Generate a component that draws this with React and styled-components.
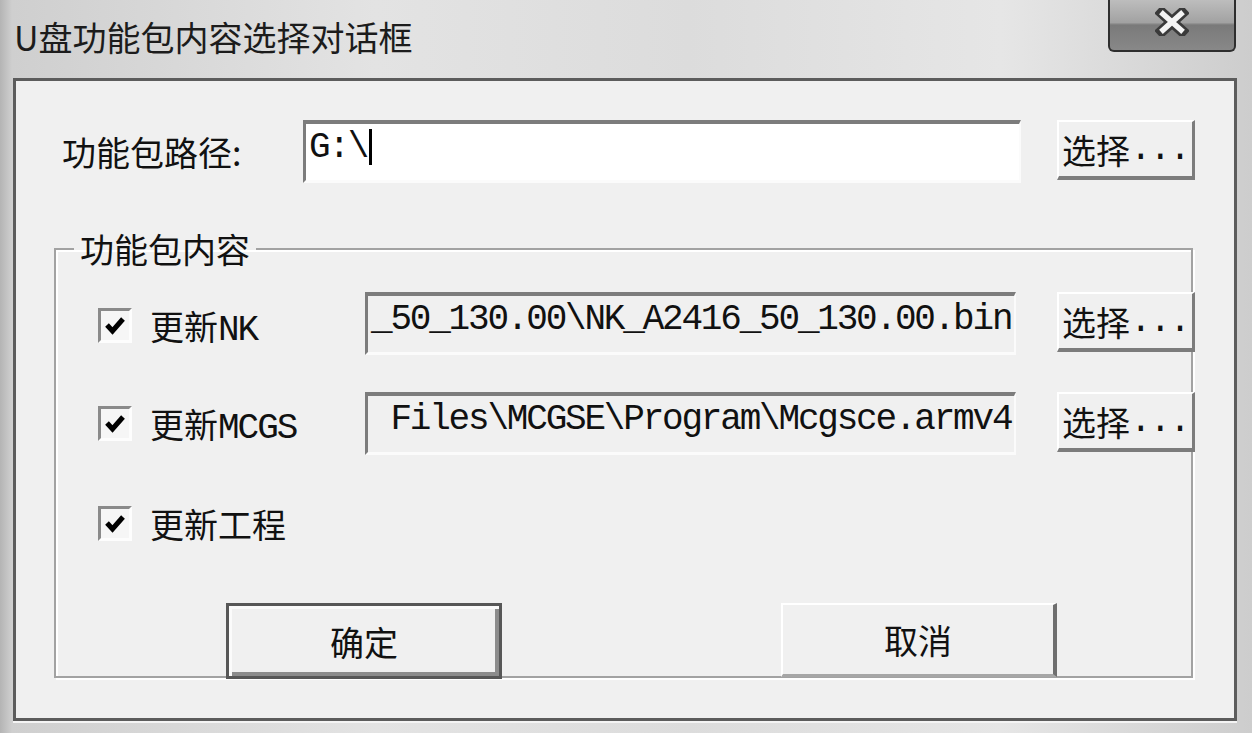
import React from 'react';
import styled, { createGlobalStyle } from 'styled-components';

const GlobalStyle = createGlobalStyle`
	html, body {
		margin: 0;
		padding: 0;
	}
	body {
		width: 1252px;
		height: 733px;
		overflow: hidden;
		font-family: "Liberation Mono", "Noto Sans CJK SC", monospace;
		color: #111;
	}
`;

const Window = styled.div`
	width: 1252px;
	height: 733px;
	box-sizing: border-box;
	display: flex;
	flex-direction: column;
	padding: 0 15px 12px 13px;
	background: linear-gradient(90deg, #b4b4b4 0px, #cfcfcf 12px, #e3e3e3 30%, #dcdcdc 55%, #e6e6e6 80%, #cdcdcd 100%);
`;

const TitleBar = styled.div`
	height: 78px;
	flex-shrink: 0;
	display: flex;
	align-items: flex-start;
`;

const Title = styled.div`
	margin: 18px 0 0 1px;
	font-family: "Noto Sans CJK SC", sans-serif;
	font-size: 34px;
	line-height: 38px;
	color: #1c1c1c;
`;

const CloseButton = styled.div`
	margin-left: auto;
	margin-right: 1px;
	width: 128px;
	height: 52px;
	box-sizing: border-box;
	border: 2px solid #2e2e2e;
	border-top: none;
	border-radius: 0 0 6px 6px;
	background: linear-gradient(180deg, #bdbdbd 0%, #a2a2a2 45%, #7a7a7a 50%, #888 100%);
	display: flex;
	align-items: center;
	justify-content: center;
	padding-bottom: 6px;
`;

const Client = styled.div`
	flex: 1;
	display: flex;
	flex-direction: column;
	background: #f0f0f0;
	border: 3px solid #5c5c5c;
	box-shadow: 0 2px 0 #f4f4f4;
	padding: 39px 39px 0 38px;
`;

const PathRow = styled.div`
	display: flex;
	align-items: flex-start;
	margin-left: 8px;
`;

const PathLabel = styled.div`
	width: 241px;
	height: 63px;
	flex-shrink: 0;
	display: flex;
	align-items: center;
`;

const Cjk = styled.span`
	font-family: "Noto Sans CJK SC", sans-serif;
	font-size: 34px;
	letter-spacing: 0;
`;

const Field = styled.div`
	width: ${p => p.$width}px;
	height: 63px;
	flex-shrink: 0;
	box-sizing: border-box;
	background: ${p => (p.$white ? '#fff' : '#f0f0f0')};
	border-top: 4px solid #7c7c7c;
	border-left: 3px solid #7c7c7c;
	border-right: 2px solid #fbfbfb;
	border-bottom: 3px solid #fbfbfb;
	padding: 2px 0 0 3px;
	font-size: 36px;
	letter-spacing: -2.2px;
	line-height: 44px;
	white-space: pre;
	overflow: hidden;
`;

const Caret = styled.span`
	display: inline-block;
	width: 3px;
	height: 36px;
	background: #000;
	vertical-align: -8px;
	margin-left: 2px;
`;

const SmallButton = styled.div`
	width: 138px;
	height: 60px;
	flex-shrink: 0;
	box-sizing: border-box;
	margin-left: ${p => p.$gap}px;
	background: #f0f0f0;
	border-top: 2px solid #fff;
	border-left: 2px solid #fff;
	border-right: 3px solid #7c7c7c;
	border-bottom: 4px solid #7c7c7c;
	display: flex;
	align-items: center;
	padding-left: 3px;
	font-size: 36px;
	letter-spacing: -2px;
	white-space: pre;
`;

const Group = styled.fieldset`
	margin: 49px 2px 0 0;
	padding: 26px 0 0 0;
	border: 2px solid #a2a2a2;
	box-shadow: inset 2px 2px 0 #fff, 2px 2px 0 #fff;
	min-width: 0;
`;

const Legend = styled.legend`
	margin-left: 18px;
	padding: 0 6px;
	font-family: "Noto Sans CJK SC", sans-serif;
	font-size: 34px;
	line-height: 34px;
`;

const GroupBody = styled.div`
	padding-left: 42px;
	display: flex;
	flex-direction: column;
	gap: 37px;
`;

const Row = styled.div`
	display: flex;
	align-items: flex-start;
`;

const CheckLabel = styled.div`
	width: 267px;
	height: 63px;
	flex-shrink: 0;
	display: flex;
	align-items: center;
	gap: 18px;
	font-size: 36px;
	letter-spacing: -2px;
	padding-top: ${p => p.$shift || 0}px;
	box-sizing: border-box;
`;

const CheckBox = styled.div`
	width: 34px;
	height: 35px;
	flex-shrink: 0;
	box-sizing: border-box;
	background: #f6f6f6;
	border-top: 3px solid #8a8a8a;
	border-left: 3px solid #8a8a8a;
	border-right: 3px solid #fdfdfd;
	border-bottom: 3px solid #fdfdfd;
	display: flex;
	align-items: center;
	justify-content: center;
`;

const ButtonRow = styled.div`
	display: flex;
	margin: 48px 0 -3px 170px;
	gap: 279px;
`;

const DialogButton = styled.div`
	width: 276px;
	height: ${p => (p.$default ? 76 : 74)}px;
	box-sizing: border-box;
	background: #f0f0f0;
	display: flex;
	align-items: center;
	justify-content: center;
	font-family: "Noto Sans CJK SC", sans-serif;
	font-size: 34px;
	${p =>
		p.$default
			? `border: 3px solid #575757;
		box-shadow: inset 3px 3px 0 #fbfbfb, inset -4px -4px 0 #8c8c8c;`
			: `border-top: 2px solid #fff;
		border-left: 2px solid #fff;
		border-right: 4px solid #6e6e6e;
		border-bottom: 3px solid #a6a6a6;`}
`;

function CloseGlyph() {
	return (
		<svg width="34" height="28" viewBox="0 0 34 28">
			<path d="M7 5 L27 23 M27 5 L7 23" stroke="#3a3a3a" strokeWidth="11" strokeLinecap="square" />
			<path d="M8 6 L26 22 M26 6 L8 22" stroke="#f4f4f4" strokeWidth="5.5" strokeLinecap="square" />
		</svg>
	);
}

function Tick() {
	return (
		<svg width="22" height="19" viewBox="0 0 22 19">
			<path d="M3 9 L8.5 15 L19 3" fill="none" stroke="#000" strokeWidth="5" />
		</svg>
	);
}

function Choose({ gap }) {
	return (
		<SmallButton $gap={gap}>
			<Cjk>选择</Cjk>...
		</SmallButton>
	);
}

function Option({ name, latin, path, shift }) {
	return (
		<Row>
			<CheckLabel $shift={shift}>
				<CheckBox>
					<Tick />
				</CheckBox>
				<span>
					<Cjk>{name}</Cjk>
					{latin}
				</span>
			</CheckLabel>
			{path !== undefined && (
				<>
					<Field $width={651}>{path}</Field>
					<Choose gap={41} />
				</>
			)}
		</Row>
	);
}

export default function App() {
	return (
		<Window>
			<GlobalStyle />
			<TitleBar>
				<Title>U盘功能包内容选择对话框</Title>
				<CloseButton>
					<CloseGlyph />
				</CloseButton>
			</TitleBar>
			<Client>
				<PathRow>
					<PathLabel>
						<Cjk>功能包路径:</Cjk>
					</PathLabel>
					<Field $width={718} $white>
						G:\<Caret />
					</Field>
					<Choose gap={36} />
				</PathRow>
				<Group>
					<Legend>功能包内容</Legend>
					<GroupBody>
						<Option name="更新" latin="NK" path="_50_130.00\NK_A2416_50_130.00.bin" shift={4} />
						<Option name="更新" latin="MCGS" path=" Files\MCGSE\Program\Mcgsce.armv4" />
						<Option name="更新工程" latin="" />
					</GroupBody>
					<ButtonRow>
						<DialogButton $default>确定</DialogButton>
						<DialogButton>取消</DialogButton>
					</ButtonRow>
				</Group>
			</Client>
		</Window>
	);
}
